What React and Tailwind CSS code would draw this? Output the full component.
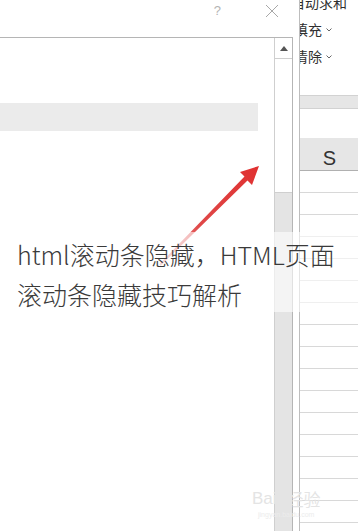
import React from "react";

const cjk = "font-['Noto_Sans_CJK_SC','Noto_Sans',sans-serif]";

function Chevron() {
  return (
    <svg width="6" height="4" viewBox="0 0 6 4" className="ml-[4px]">
      <path d="M0.5 0.5 L3 3 L5.5 0.5" fill="none" stroke="#666" strokeWidth="1" />
    </svg>
  );
}

function Dialog() {
  return (
    <div className="w-[300px] h-full shrink-0 flex flex-col border-r border-[#bdbdbd] bg-white">
      <div className="h-[37px] shrink-0 flex justify-end items-start pt-[3px] pr-[20px] gap-[44px]">
        <span className="text-[13px] leading-[16px] text-[#b4b4b4] font-['Liberation_Sans',sans-serif]">?</span>
        <svg width="14" height="14" viewBox="0 0 14 14" className="mt-[1px]">
          <path d="M1 1 L13 13 M13 1 L1 13" stroke="#a8a8a8" strokeWidth="1" />
        </svg>
      </div>
      <div className="flex-1 flex mr-[6px] border-t border-r border-[#b5b5b5]">
        <div className="flex-1 flex flex-col">
          <div className="h-[65px] shrink-0" />
          <div className="h-[28px] shrink-0 w-[258px] bg-[#ebebeb]" />
        </div>
        <div className="w-[18px] flex flex-col border-l border-[#cfcfcf]">
          <div className="h-[20px] shrink-0 mt-[1px] flex items-center justify-center border-b border-[#cfcfcf]">
            <svg width="8" height="5" viewBox="0 0 8 5">
              <path d="M0 5 L4 0 L8 5 Z" fill="#555" />
            </svg>
          </div>
          <div className="h-[134px] shrink-0 bg-white border-b border-[#cfcfcf]" />
          <div className="flex-1 bg-[#e4e4e4]" />
        </div>
      </div>
    </div>
  );
}

function Ribbon() {
  const rows = Array.from({ length: 17 });
  return (
    <div className={`flex-1 h-full overflow-hidden flex flex-col bg-white ${cjk}`}>
      <div className="-mt-[11px] shrink-0 flex flex-col text-[14px] leading-[27px] text-[#2f2f2f] whitespace-nowrap">
        <div className="-ml-[9px] h-[27px]">自动求和</div>
        <div className="-ml-[6px] h-[27px] flex items-center">填充<Chevron /></div>
        <div className="-ml-[6px] h-[27px] flex items-center">清除<Chevron /></div>
      </div>
      <div className="h-[25px] shrink-0" />
      <div className="h-[14px] shrink-0 bg-[#e6e6e6] border-y border-[#d2d2d2]" />
      <div className="h-[29px] shrink-0" />
      <div className="h-[33px] shrink-0 bg-[#e6e6e6] border-b border-[#b0b0b0] flex items-end justify-center pl-[1px]">
        <span className="text-[20px] leading-[24px] text-[#333] font-['Liberation_Sans',sans-serif]">S</span>
      </div>
      {rows.map((_, i) => (
        <div key={i} className="h-[22px] shrink-0 border-b border-[#d8d8d8]" />
      ))}
    </div>
  );
}

export default function App() {
  return (
    <div className="relative w-[358px] h-[531px] overflow-hidden bg-white flex">
      <Dialog />
      <Ribbon />
      <svg className="absolute left-0 top-0" width="358" height="531" viewBox="0 0 358 531">
        <defs>
          <linearGradient id="ag" x1="160" y1="265" x2="259" y2="166" gradientUnits="userSpaceOnUse">
            <stop offset="0" stopColor="#e04040" stopOpacity="0.5" />
            <stop offset="0.4" stopColor="#dc3434" stopOpacity="0.9" />
            <stop offset="1" stopColor="#e03030" />
          </linearGradient>
        </defs>
        <polygon
          points="259,166 252,185 247.5,180.5 160.7,265.7 159.3,264.3 244.5,176.5 240,172"
          fill="url(#ag)"
        />
      </svg>
      <div className="absolute left-0 top-[232px] w-[358px] h-[80px] bg-white/60">
        <div className={`pt-[2px] pl-[17px] text-[25px] leading-[40px] text-[#3a3a3a] font-light whitespace-nowrap ${cjk}`}>
          <div>html滚动条隐藏，HTML页面</div>
          <div>滚动条隐藏技巧解析</div>
        </div>
      </div>
      <div className={`absolute left-[252px] top-[488px] flex flex-col items-center text-[#e4e4e4] ${cjk}`}>
        <div className="flex items-end text-[17px] leading-[22px] font-['Liberation_Sans',sans-serif]">
          <span>Bai</span>
          <span className="text-[13px] mx-[1px]">●</span>
          <span className={cjk}>经验</span>
        </div>
        <div className="text-[7px] leading-[9px] font-['Liberation_Sans',sans-serif] text-[#ececec]">jingyan.baidu.com</div>
      </div>
    </div>
  );
}
